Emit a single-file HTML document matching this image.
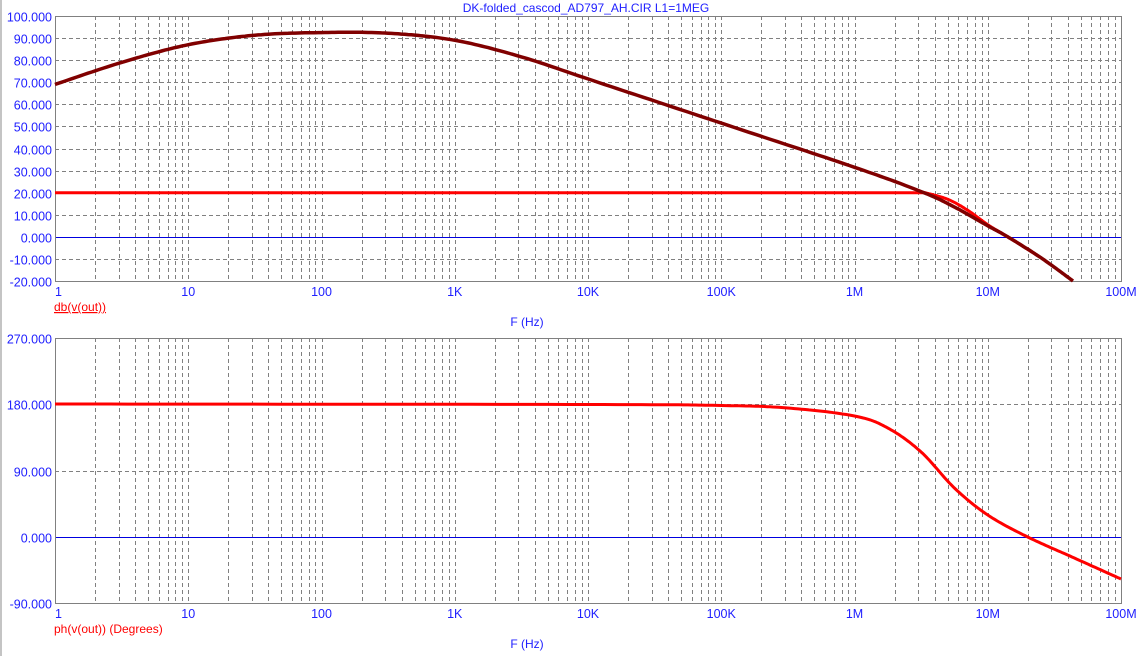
<!DOCTYPE html>
<html><head><meta charset="utf-8"><style>
html,body{margin:0;padding:0;background:#fff;}
svg{display:block;font-family:"Liberation Sans",Arial,sans-serif;}
</style></head><body>
<svg id="s" width="1141" height="656" viewBox="0 0 1141 656" xmlns="http://www.w3.org/2000/svg">
<line x1="1" y1="0" x2="1" y2="656" stroke="#888" stroke-width="1"/>
<text x="586" y="12" font-size="12" fill="#2020ff" text-anchor="middle">DK-folded_cascod_AD797_AH.CIR L1=1MEG</text>
<g id="g"></g>
</svg>
<script>
var NS="http://www.w3.org/2000/svg",g=document.getElementById('g');
function el(t,a,txt){var e=document.createElementNS(NS,t);for(var k in a)e.setAttribute(k,a[k]);if(txt!==undefined)e.textContent=txt;g.appendChild(e);return e;}
var L=55,R=1121,D=(R-L)/8;
function X(l){return L+l*D;}
function plot(T,B,ylabels,zeroY,xl,labelY,lbl,fy){
  for(var d=0;d<8;d++)for(var m=1;m<=10;m++){if(d==0&&m==1)continue;if(d==7&&m==10)continue;var x=Math.round(X(d+Math.log10(m)))+0.5;
    el('line',{x1:x,y1:T,x2:x,y2:B,stroke:'#808080','stroke-dasharray':'4,3','stroke-width':1});}
  var n=ylabels.length-1;
  for(var i=0;i<=n;i++){var y=Math.round(T+(B-T)*i/n)+0.5;
    if(i>0&&i<n&&y!=zeroY)el('line',{x1:L,y1:y,x2:R,y2:y,stroke:'#808080','stroke-dasharray':'4,3','stroke-width':1});
    el('text',{x:52,y:y+5,'font-size':12.5,fill:'#2020ff','text-anchor':'end'},ylabels[i]);}
  el('line',{x1:L,y1:zeroY,x2:R,y2:zeroY,stroke:'#0000e0','stroke-width':1});
  el('rect',{x:L+0.5,y:T+0.5,width:R-L,height:B-T,fill:'none',stroke:'#808080','stroke-width':1});
  var xs=['1','10','100','1K','10K','100K','1M','10M','100M'];
  for(var i=0;i<9;i++){el('text',{x:i==0?L:X(i),y:B+15,'font-size':12.5,fill:'#2020ff','text-anchor':i==0?'start':'middle'},xs[i]);}
  el('text',{x:54,y:labelY,'font-size':12,fill:'#ff0000','text-decoration':lbl[1]?'underline':'none'},lbl[0]);
  el('text',{x:527,y:fy,'font-size':12,fill:'#2020ff','text-anchor':'middle'},'F (Hz)');
}
plot(16,281,['100.000','90.000','80.000','70.000','60.000','50.000','40.000','30.000','20.000','10.000','0.000','-10.000','-20.000'],237.5,0,311,['db(v(out))',1],326);
plot(338,603,['270.000','180.000','90.000','0.000','-90.000'],537.5,0,633,['ph(v(out)) (Degrees)',0],648);
function path(pts,fx,fy){var s='';for(var i=0;i<pts.length;i++){s+=(i?'L':'M')+fx(pts[i][0]).toFixed(1)+','+fy(pts[i][1]).toFixed(1);}return s;}
function smooth(k){var o=[];for(var i=0;i<k.length-1;i++){var p0=k[Math.max(0,i-1)],p1=k[i],p2=k[i+1],p3=k[Math.min(k.length-1,i+2)];
 for(var t=0;t<1;t+=0.05){var t2=t*t,t3=t2*t;var f=function(a,b,c,d){return 0.5*((2*b)+(-a+c)*t+(2*a-5*b+4*c-d)*t2+(-a+3*b-3*c+d)*t3);};
 o.push([f(p0[0],p1[0],p2[0],p3[0]),f(p0[1],p1[1],p2[1],p3[1])]);}}o.push(k[k.length-1]);return o;}
var dbY=function(v){return 16+(100-v)*(265/120);};
var dk=smooth([[0,69],[0.5,79],[1,87],[1.5,91.3],[2,92.5],[2.5,92.2],[3,89],[3.5,81.5],[4,71.5],[5,51.5],[6,31.5],[6.5,20.5],[6.75,13.5],[7,5],[7.15,0],[7.4,-9.5],[7.64,-20]]);
var rd=smooth([[6.53,20],[6.7,17],[6.85,12],[7,5.5],[7.15,0],[7.4,-9.5]]);
el('path',{d:path([[0,20],[6.53,20]],X,dbY)+path(rd,X,dbY).replace('M','L'),fill:'none',stroke:'#ff0000','stroke-width':3});
el('path',{d:path(dk,X,dbY),fill:'none',stroke:'#800000','stroke-width':3.5});
var yp=function(y){return y;};
var ph=smooth([[0,404],[4,404.5],[5,405.5],[5.5,408],[6,416],[6.25,428],[6.5,452],[6.75,488],[7,515],[7.3,537],[7.65,558],[8,579]]);
el('path',{d:path(ph,X,yp),fill:'none',stroke:'#ff0000','stroke-width':3});
</script>
</body></html>
